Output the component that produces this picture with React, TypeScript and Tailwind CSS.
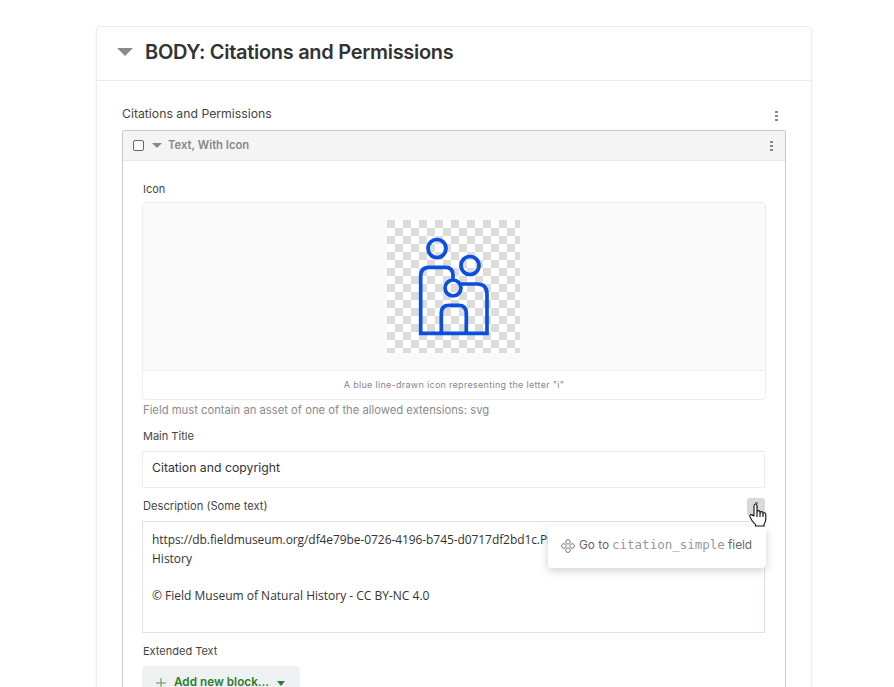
import React from 'react'

function Dots({ className }: { className?: string }) {
    return (
        <span className={`flex flex-col gap-[2px] ${className ?? ''}`}>
            <span className="h-[2px] w-[3px] bg-[#888]" />
            <span className="h-[2px] w-[3px] bg-[#888]" />
            <span className="h-[2px] w-[3px] bg-[#888]" />
        </span>
    )
}

function FamilyIcon() {
    return (
        <svg width="71" height="99" viewBox="0 0 71 99" fill="none" stroke="#0b4fe0" strokeWidth="3.7">
            <circle cx="19" cy="11.5" r="9" />
            <circle cx="52" cy="28.5" r="9" />
            <circle cx="35" cy="51" r="8" />
            <path d="M35 43 V38 Q35 30.3 27 30.3 H11 Q2.7 30.3 2.7 39 V96.3 H69 V57 Q69 47 59 47 H43" />
            <path d="M23.3 96.3 V76 Q23.3 68.3 31 68.3 H40.5 Q48.3 68.3 48.3 76 V96.3" />
        </svg>
    )
}

function MoveIcon() {
    return (
        <svg width="14" height="14" viewBox="0 0 14 14" fill="none" stroke="#8a8a8a" strokeWidth="1">
            <rect x="5" y="0.8" width="4" height="4" rx="1" transform="rotate(45 7 2.8)" />
            <rect x="5" y="9.2" width="4" height="4" rx="1" transform="rotate(45 7 11.2)" />
            <rect x="0.8" y="5" width="4" height="4" rx="1" transform="rotate(45 2.8 7)" />
            <rect x="9.2" y="5" width="4" height="4" rx="1" transform="rotate(45 11.2 7)" />
        </svg>
    )
}

function HandCursor() {
    return (
        <svg width="18" height="24" viewBox="0 0 18 24" fill="#fff" stroke="#111" strokeWidth="1.1" strokeLinejoin="round">
            <path d="M5 13 V3 Q5 1 6.5 1 Q8 1 8 3 V9 Q8 7.6 9.5 7.6 Q11 7.6 11 9.2 V10 Q11 8.6 12.5 8.6 Q14 8.6 14 10.2 V11 Q14 9.8 15.3 9.8 Q16.8 9.8 16.8 11.5 V16 Q16.8 19 15 21 V23 H6.5 V21.4 Q4.5 20 3 17.5 L1 14 Q0.3 12.4 1.6 11.8 Q3 11.2 4 12.6 Z" />
            <path d="M8 9 V14 M11 10 V14 M14 11 V14" fill="none" />
        </svg>
    )
}

export default function App() {
    return (
        <div className="relative h-[687px] w-[894px] overflow-hidden bg-white pt-[26px] pl-[96px] font-['Inter',sans-serif] text-[#454545]">
            <div className="w-[716px] h-[700px] rounded-[4px] border border-[#ececec] shadow-[0_1px_3px_rgba(0,0,0,0.05)]">
                <div className="flex h-[54px] items-center border-b border-[#ececec] pb-[3px] pl-[20px]">
                    <span className="h-0 w-0 border-x-[8px] border-t-[8px] border-x-transparent border-t-[#8a8a8a]" />
                    <h2 className="ml-[12px] text-[20px] font-semibold tracking-[-0.3px] text-[#333]">BODY: Citations and Permissions</h2>
                </div>

                <div className="pl-[25px] pr-[25px] pt-[24px]">
                    <div className="flex h-[25px] items-start justify-between">
                        <span className="text-[12.25px] leading-[18px]">Citations and Permissions</span>
                        <Dots className="mt-[6px] mr-[8px]" />
                    </div>

                    <div className="relative rounded-t-[2px] border border-[#c9c9c9] h-[600px]">
                        <div className="flex h-[30px] items-center border-b border-[#e6e6e6] bg-[#f4f4f4] pl-[10px] pr-[12px]">
                            <span className="h-[11px] w-[11px] rounded-[2px] border border-[#666] bg-white" />
                            <span className="ml-[8px] h-0 w-0 border-x-[5px] border-t-[5px] border-x-transparent border-t-[#888]" />
                            <span className="ml-[6px] text-[11.25px] font-semibold text-[#888]">Text, With Icon</span>
                            <Dots className="ml-auto" />
                        </div>

                        <div className="pl-[19px] pr-[19px] pt-[20px]">
                            <div className="pl-px text-[11px] leading-[16px]">Icon</div>
                            <div className="mt-[5px] rounded-[4px] border border-[#ededed]">
                                <div className="flex h-[167px] items-center justify-center bg-[#fafafa] pr-[2px]">
                                    <div className="flex h-[133px] w-[133px] items-center justify-center bg-[repeating-conic-gradient(#ffffff_0_25%,#dcdcdc_0_50%)] bg-[length:16px_16px]">
                                        <FamilyIcon />
                                    </div>
                                </div>
                                <div className="flex h-[29px] items-center justify-center border-t border-[#ededed] text-[9px] tracking-[0.3px] text-[#888]">
                                    A blue line-drawn icon representing the letter "i"
                                </div>
                            </div>
                            <div className="mt-[2px] pl-px text-[11.25px] leading-[16px] text-[#8a8a8a]">
                                Field must contain an asset of one of the allowed extensions: svg
                            </div>

                            <div className="mt-[10px] pl-px text-[11px] leading-[16px]">Main Title</div>
                            <div className="mr-px mt-[7px] flex h-[37px] items-center border border-[#ededed] pb-[3px] pl-[9px] text-[12.25px] text-[#333]">
                                Citation and copyright
                            </div>

                            <div className="relative mx-px mt-[10px] text-[11.15px] leading-[16px]">
                                Description (Some text)
                                <span className="absolute right-0 top-0 flex h-[18px] w-[18px] items-center justify-center rounded-[3px] bg-[#d9d9d9]">
                                    <Dots />
                                </span>
                            </div>
                            <div className="relative mr-px mt-[7px] h-[112px] border border-[#dbe3f0] pl-[9px] pt-[9px] font-['Open_Sans',sans-serif] text-[12px] leading-[18.5px] text-[#333]">
                                <div className="tracking-[-0.08px]">https://db.fieldmuseum.org/df4e79be-0726-4196-b745-d0717df2bd1c.Png Field Museum of Natural</div>
                                <div>History</div>
                                <div className="mt-[18.5px]">© Field Museum of Natural History - CC BY-NC 4.0</div>
                                <div className="absolute right-[-2px] top-[4px] flex h-[42px] w-[218px] items-center rounded-[4px] bg-white pb-[3px] pl-[13px] font-['Inter',sans-serif] text-[11.8px] text-[#666] shadow-[0_3px_10px_rgba(0,0,0,0.18)]">
                                    <MoveIcon />
                                    <span className="ml-[4px]">Go to</span>
                                    <span className="ml-[3px] font-['DejaVu_Sans_Mono',monospace] text-[12.5px] text-[#999]">citation_simple</span>
                                    <span className="ml-[3px]">field</span>
                                </div>
                            </div>

                            <div className="ml-px mt-[10px] text-[11px] leading-[16px]">Extended Text</div>
                            <div className="mt-[7px] flex h-[40px] w-[158px] items-start rounded-[4px] bg-[#eff2f2] pl-[14px] pt-[8px] text-[11.75px] font-semibold text-[#2f7d2f]">
                                <svg className="mt-[4px]" width="10" height="10" viewBox="0 0 10 10" stroke="#5b8f5b" strokeWidth="1"><path d="M5 0 V10 M0 5 H10" /></svg>
                                <span className="ml-[8px]">Add new block...</span>
                                <span className="ml-[8px] mt-[7px] h-0 w-0 border-x-[4px] border-t-[5px] border-x-transparent border-t-[#2f7d2f]" />
                            </div>
                        </div>
                    </div>
                </div>
            </div>
            <div className="absolute left-[749px] top-[503px]">
                <HandCursor />
            </div>
        </div>
    )
}
